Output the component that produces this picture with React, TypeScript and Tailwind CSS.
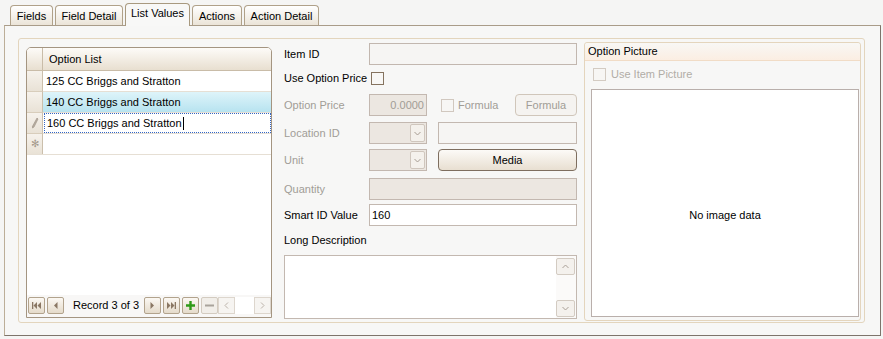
import React from "react";

function Tab({ children, cls, active }: { children: React.ReactNode; cls: string; active?: boolean }) {
  if (active) {
    return (
      <div
        className={`${cls} relative z-10 h-[23px] mb-[-1px] flex items-center justify-center pb-[3px] border border-b-0 border-[#a8997f] rounded-t-[4px] bg-[#f8f8f7]`}
      >
        {children}
      </div>
    );
  }
  return (
    <div
      className={`${cls} h-[20px] flex items-center justify-center pt-[1px] border border-b-0 border-[#b0a189] rounded-t-[4px] bg-gradient-to-b from-[#ffffff] to-[#ebe4d8]`}
    >
      {children}
    </div>
  );
}

function NavBtn({ children, disabled }: { children: React.ReactNode; disabled?: boolean }) {
  return (
    <div
      className={`w-[17px] h-[17px] flex items-center justify-center rounded-[2px] border ${
        disabled ? "border-[#d3cbc0] bg-[#f1eee9]" : "border-[#b2a38d] bg-gradient-to-b from-[#fbf8f3] to-[#e5dbcb]"
      }`}
    >
      {children}
    </div>
  );
}

function Chevron({ dir, color }: { dir: "up" | "down" | "left" | "right"; color: string }) {
  const d =
    dir === "down"
      ? "M1.5 3 L4.5 6 L7.5 3"
      : dir === "up"
      ? "M1.5 6 L4.5 3 L7.5 6"
      : dir === "left"
      ? "M6 1.5 L3 4.5 L6 7.5"
      : "M3 1.5 L6 4.5 L3 7.5";
  return (
    <svg width="9" height="9" viewBox="0 0 9 9">
      <path d={d} fill="none" stroke={color} strokeWidth="1" />
    </svg>
  );
}

function Combo() {
  return (
    <div className="w-[58px] h-[22px] border border-[#c3b8b0] bg-[#ece7e1] flex items-center justify-end pr-[1px]">
      <div className="w-[15px] h-[18px] border border-[#cfc6bd] rounded-[2px] bg-[#f4f1ec] flex items-center justify-center">
        <Chevron dir="down" color="#a79d93" />
      </div>
    </div>
  );
}

function Grid() {
  const rowSel = "w-[16px] shrink-0 border-r border-[#cbbfac] bg-gradient-to-b from-[#f6f2ec] to-[#e9e2d6] flex items-center justify-center";
  return (
    <div className="mt-[8px] w-[246px] h-[271px] border border-[#a49581] rounded-t-[5px] bg-white flex flex-col overflow-hidden">
      <div className="h-[23px] flex border-b border-[#c9bca8] bg-gradient-to-b from-[#fdfbf8] to-[#e8dfd0]">
        <div className="w-[16px] shrink-0 border-r border-[#c9bca8]" />
        <div className="pl-[6px] flex items-center">Option List</div>
      </div>
      <div className="h-[21px] flex border-b border-[#e6dfd4]">
        <div className={`${rowSel} border-b border-b-[#d8cdbb] -mb-px`} />
        <div className="pl-[3px] flex items-center">125 CC Briggs and Stratton</div>
      </div>
      <div className="h-[21px] flex border-b border-[#e6dfd4]">
        <div className={`${rowSel} border-b border-b-[#d8cdbb] -mb-px`} />
        <div className="flex-1 pl-[3px] flex items-center bg-gradient-to-b from-[#def4fa] to-[#b7e3f0]">140 CC Briggs and Stratton</div>
      </div>
      <div className="h-[21px] flex border-b border-[#e6dfd4]">
        <div className={`${rowSel} border-b border-b-[#d8cdbb] -mb-px`}>
          <svg width="8" height="12" viewBox="0 0 8 12">
            <path d="M6 1 L7 2 L3 10 L1.5 11 L1.5 9.3 Z" fill="#b8aea2" stroke="#9a8f83" strokeWidth="0.6" />
          </svg>
        </div>
        <div className="flex-1 ml-px pl-[2px] flex items-center border border-dotted border-[#3466c4]">
          <span>160 CC Briggs and Stratton</span>
          <span className="inline-block w-px h-[13px] bg-black ml-[1px]" />
        </div>
      </div>
      <div className="h-[21px] flex border-b border-[#e6dfd4]">
        <div className={`${rowSel}`}>
          <span className="text-[10px] text-[#a59a8d] leading-none">✻</span>
        </div>
        <div />
      </div>
      <div className="flex-1" />
      <div className="h-[22px] bg-[#f8f7f6] flex items-start pl-[1px] pt-[2px] gap-[2px]">
        <NavBtn>
          <svg width="11" height="9" viewBox="0 0 11 9">
            <rect x="1" y="1" width="1.3" height="7" fill="#8a7763" />
            <path d="M6 1 L2.5 4.5 L6 8 Z M10 1 L6.5 4.5 L10 8 Z" fill="#8a7763" />
          </svg>
        </NavBtn>
        <NavBtn>
          <svg width="9" height="9" viewBox="0 0 9 9">
            <path d="M6.5 1 L3 4.5 L6.5 8 Z" fill="#8a7763" />
          </svg>
        </NavBtn>
        <div className="w-[76px] h-[17px] flex items-center pl-[7px]">Record 3 of 3</div>
        <NavBtn>
          <svg width="9" height="9" viewBox="0 0 9 9">
            <path d="M2.5 1 L6 4.5 L2.5 8 Z" fill="#8a7763" />
          </svg>
        </NavBtn>
        <NavBtn>
          <svg width="11" height="9" viewBox="0 0 11 9">
            <path d="M1 1 L4.5 4.5 L1 8 Z M5 1 L8.5 4.5 L5 8 Z" fill="#8a7763" />
            <rect x="8.7" y="1" width="1.3" height="7" fill="#8a7763" />
          </svg>
        </NavBtn>
        <NavBtn>
          <svg width="11" height="11" viewBox="0 0 11 11">
            <path d="M4.3 1 H6.7 V4.3 H10 V6.7 H6.7 V10 H4.3 V6.7 H1 V4.3 H4.3 Z" fill="#2f9a18" />
          </svg>
        </NavBtn>
        <NavBtn disabled>
          <svg width="11" height="11" viewBox="0 0 11 11">
            <rect x="1" y="4.5" width="9" height="2" fill="#a9a39c" />
          </svg>
        </NavBtn>
        <div className="flex -ml-[2px]">
          <div className="w-[17px] h-[17px] border border-[#ddd6cd] bg-[#f6f4f1] flex items-center justify-center">
            <Chevron dir="left" color="#bcb3aa" />
          </div>
          <div className="w-[19px] h-[17px] bg-white" />
          <div className="w-[17px] h-[17px] border border-[#ddd6cd] bg-[#f6f4f1] flex items-center justify-center">
            <Chevron dir="right" color="#bcb3aa" />
          </div>
        </div>
      </div>
    </div>
  );
}

function Middle() {
  const label = "w-[85px] shrink-0";
  const gray = "text-[#a19d96]";
  return (
    <div className="ml-[12px] mt-[4px] w-[293px] flex flex-col">
      <div className="h-[22px] flex items-center">
        <div className={label}>Item ID</div>
        <div className="flex-1 h-full border border-[#c2b7af] bg-[#f6f5f3]" />
      </div>
      <div className="mt-[6px] h-[15px] flex items-center">
        <div className={label}>Use Option Price</div>
        <div className="ml-[2px] w-[13px] h-[13px] border border-[#85735f] bg-[#f8f7f5]" />
      </div>
      <div className="mt-[8px] h-[22px] flex items-center">
        <div className={`${label} ${gray}`}>Option Price</div>
        <div className={`w-[58px] h-full border border-[#c3b8b0] bg-[#ece7e1] flex items-center justify-end pr-[2px] ${gray}`}>0.0000</div>
        <div className="ml-[14px] w-[13px] h-[13px] border border-[#d1c8bf] bg-[#f7f6f4]" />
        <div className={`ml-[4px] ${gray}`}>Formula</div>
        <div className={`ml-auto w-[62px] h-full border border-[#d0c6ba] rounded-[4px] bg-[#f5f3f0] flex items-center justify-center pt-[1px] ${gray}`}>
          Formula
        </div>
      </div>
      <div className="mt-[6px] h-[22px] flex items-center">
        <div className={`${label} ${gray}`}>Location ID</div>
        <Combo />
        <div className="ml-[11px] flex-1 h-full border border-[#c3b8b0] bg-[#f6f5f3]" />
      </div>
      <div className="mt-[5px] h-[22px] flex items-center">
        <div className={`${label} ${gray}`}>Unit</div>
        <Combo />
        <div className="ml-[11px] flex-1 h-full border border-[#7e6e5f] rounded-[4px] bg-gradient-to-b from-[#fcfaf7] to-[#e8dfd1] flex items-center justify-center">
          Media
        </div>
      </div>
      <div className="mt-[7px] h-[22px] flex items-center">
        <div className={`${label} ${gray}`}>Quantity</div>
        <div className="flex-1 h-full border border-[#c3b8b0] bg-[#ece7e1]" />
      </div>
      <div className="mt-[4px] h-[22px] flex items-center">
        <div className={label}>Smart ID Value</div>
        <div className="flex-1 h-full border border-[#c3b8b0] bg-white flex items-center pl-[2px]">160</div>
      </div>
      <div className="mt-[7px] h-[15px] flex items-center">Long Description</div>
      <div className="mt-[7px] h-[64px] border border-[#c3b8b0] bg-white flex justify-end">
        <div className="w-[20px] flex flex-col justify-between pt-[2px] pb-[1px] pr-[1px] bg-[#fbfaf9]">
          <div className="w-[19px] h-[17px] border border-[#d3cbc2] rounded-[2px] bg-[#f4f1ed] flex items-center justify-center">
            <Chevron dir="up" color="#aaa097" />
          </div>
          <div className="w-[19px] h-[17px] border border-[#d3cbc2] rounded-[2px] bg-[#f4f1ed] flex items-center justify-center">
            <Chevron dir="down" color="#aaa097" />
          </div>
        </div>
      </div>
    </div>
  );
}

function OptionPicture() {
  return (
    <div className="ml-[7px] mt-[3px] w-[277px] h-[279px] border border-[#e4d5bd] rounded-[3px] flex flex-col bg-[#f7f7f6]">
      <div className="h-[18px] border-b border-[#f1dcc6] bg-gradient-to-b from-[#f8f7f5] to-[#fbeee2] flex items-center pl-[3px] rounded-t-[3px]">
        Option Picture
      </div>
      <div className="mt-[6px] h-[15px] flex items-center pl-[8px]">
        <div className="w-[13px] h-[13px] border border-[#d3cbc2] bg-[#f7f6f4]" />
        <div className="ml-[5px] text-[#b1ada6]">Use Item Picture</div>
      </div>
      <div className="mt-[7px] ml-[6px] w-[268px] h-[228px] border border-[#b9afab] bg-white flex items-center justify-center pt-[24px]">
        No image data
      </div>
    </div>
  );
}

export default function App() {
  return (
    <div className="w-[883px] h-[339px] bg-[#f5f5f4] font-['Liberation_Sans',Arial,sans-serif] text-[11px] text-black overflow-hidden leading-none">
      <div className="flex items-end h-[25px] pl-[10px] gap-[2px]">
        <Tab cls="w-[43px]">Fields</Tab>
        <Tab cls="w-[68px]">Field Detail</Tab>
        <Tab cls="w-[65px]" active>
          List Values
        </Tab>
        <Tab cls="w-[50px]">Actions</Tab>
        <Tab cls="w-[75px]">Action Detail</Tab>
      </div>
      <div className="ml-[4px] w-[877px] h-[311px] border border-t-[#a99c89] border-l-[#bcae98] border-r-[#7d746b] border-b-[#7d746b] bg-[#f7f7f6] pl-[13px] pt-[12px]">
        <div className="w-[847px] h-[285px] border border-[#e3d5bd] rounded-[3px] bg-[#f7f7f6] flex items-start pl-[7px]">
          <Grid />
          <Middle />
          <OptionPicture />
        </div>
      </div>
    </div>
  );
}
